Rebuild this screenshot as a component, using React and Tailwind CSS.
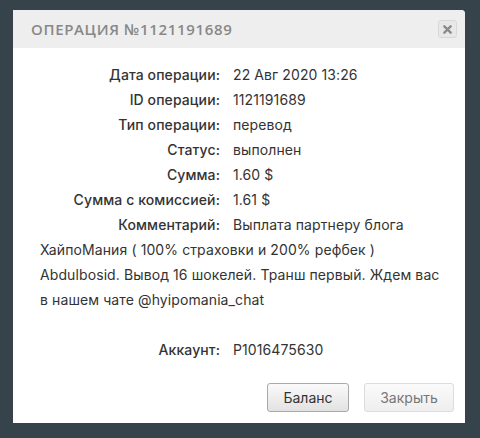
export default function App() {
  const rows = [
    ["Дата операции:", "22 Авг 2020 13:26"],
    ["ID операции:", "1121191689"],
    ["Тип операции:", "перевод"],
    ["Статус:", "выполнен"],
    ["Сумма:", "1.60 $"],
    ["Сумма с комиссией:", "1.61 $"],
  ];
  return (
    <div className="w-[480px] h-[438px] bg-[#36434b] pt-[10px] pl-[13px]" style={{ fontFamily: 'Inter, "Noto Sans", sans-serif' }}>
      <div className="w-[452px] h-[413px] bg-white rounded-tr-[4px] flex flex-col">
        <div className="h-[38px] bg-[#eeeeee] flex items-center justify-between pl-[18px] pr-[8px] rounded-tr-[4px]">
          <span className="text-[#888888] text-[15px] font-semibold tracking-[0.65px] uppercase" style={{ fontFamily: '"Open Sans", sans-serif' }}>Операция №1121191689</span>
          <button className="w-[19px] h-[18px] rounded-[3px] border border-[#d8d8d8] bg-[#e8e8e8] flex items-center justify-center">
            <svg width="9" height="9" viewBox="0 0 10 10">
              <path d="M1.5 1.5L8.5 8.5M8.5 1.5L1.5 8.5" stroke="#8a8a8a" strokeWidth="2.6" strokeLinecap="round" />
            </svg>
          </button>
        </div>
        <div className="pl-[27px] pr-[22px] pt-[14px] text-[14px] leading-[25px] text-[#333] tracking-[0.1px]">
          {rows.map(([l, v]) => (
            <div key={l}>
              <span className="inline-block w-[180px] text-right mr-[13px] font-medium">{l}</span>
              <span>{v}</span>
            </div>
          ))}
          <div>
            <span className="inline-block w-[180px] text-right mr-[13px] font-medium">Комментарий:</span>
            Выплата партнеру блога ХайпоМания ( 100% страховки и 200% рефбек ) Abdulbosid. Вывод 16 шокелей. Транш первый. Ждем вас в нашем чате @hyipomania_chat
          </div>
          <div className="h-[25px]"></div>
          <div>
            <span className="inline-block w-[180px] text-right mr-[13px] font-medium">Аккаунт:</span>
            <span>P1016475630</span>
          </div>
        </div>
        <div className="mt-auto flex justify-end gap-[15px] pr-[11px] pb-[11px]">
          <button className="w-[82px] h-[29px] rounded-[3px] border border-[#a9a9a9] bg-gradient-to-b from-[#fafafa] to-[#e2e2e2] text-[14px] text-[#333]">Баланс</button>
          <button className="w-[90px] h-[29px] rounded-[3px] border border-[#dcdcdc] bg-gradient-to-b from-[#fbfbfb] to-[#eeeeee] text-[14px] text-[#777]">Закрыть</button>
        </div>
      </div>
    </div>
  );
}
